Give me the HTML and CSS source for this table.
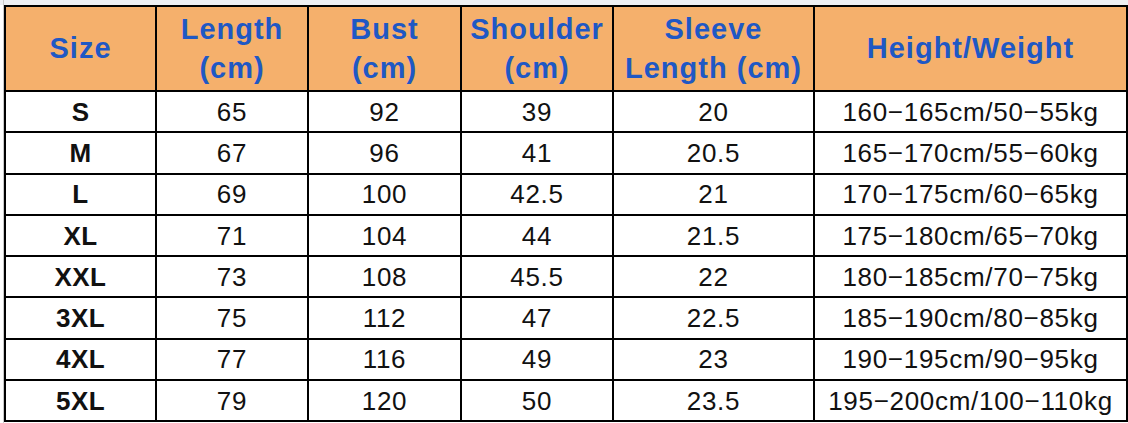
FILE: index.html
```html
<!DOCTYPE html>
<html>
<head>
<meta charset="utf-8">
<link rel="stylesheet" href="styles.css">
</head>
<body>
<div class="sheet">
  <table class="chart">
    <colgroup>
      <col class="c1"><col class="c2"><col class="c3"><col class="c4"><col class="c5"><col class="c6">
    </colgroup>
    <thead>
      <tr>
        <th>Size</th>
        <th>Length<br>(cm)</th>
        <th>Bust<br>(cm)</th>
        <th>Shoulder<br>(cm)</th>
        <th>Sleeve<br>Length (cm)</th>
        <th>Height/Weight</th>
      </tr>
    </thead>
    <tbody>
      <tr><td class="sz">S</td><td>65</td><td>92</td><td>39</td><td>20</td><td>160−165cm/50−55kg</td></tr>
      <tr><td class="sz">M</td><td>67</td><td>96</td><td>41</td><td>20.5</td><td>165−170cm/55−60kg</td></tr>
      <tr><td class="sz">L</td><td>69</td><td>100</td><td>42.5</td><td>21</td><td>170−175cm/60−65kg</td></tr>
      <tr><td class="sz">XL</td><td>71</td><td>104</td><td>44</td><td>21.5</td><td>175−180cm/65−70kg</td></tr>
      <tr><td class="sz">XXL</td><td>73</td><td>108</td><td>45.5</td><td>22</td><td>180−185cm/70−75kg</td></tr>
      <tr><td class="sz">3XL</td><td>75</td><td>112</td><td>47</td><td>22.5</td><td>185−190cm/80−85kg</td></tr>
      <tr><td class="sz">4XL</td><td>77</td><td>116</td><td>49</td><td>23</td><td>190−195cm/90−95kg</td></tr>
      <tr><td class="sz">5XL</td><td>79</td><td>120</td><td>50</td><td>23.5</td><td>195−200cm/100−110kg</td></tr>
    </tbody>
  </table>
</div>
</body>
</html>
```
FILE: styles.css
```css
html, body {
  margin: 0;
  padding: 0;
  background: #ffffff;
}
.sheet {
  width: 1128px;
  height: 423px;
  box-sizing: border-box;
  padding: 5px 0 0 4px;
  background:
    linear-gradient(to right, transparent 3px, #c9c9c9 3px, #c9c9c9 4px, transparent 4px) 0 0 / 4px 100% no-repeat,
    linear-gradient(#eef0f3, #eef0f3) 0 0 / 100% 5px no-repeat;
  font-family: "Liberation Sans", Arial, sans-serif;
  overflow: hidden;
}
.chart {
  border-collapse: collapse;
  table-layout: fixed;
  width: 1122px;
}
.c1 { width: 151px; }
.c2 { width: 152px; }
.c3 { width: 153px; }
.c4 { width: 152px; }
.c5 { width: 201px; }
.c6 { width: 313px; }
.chart th, .chart td {
  border: 2px solid #000;
  padding: 0;
  text-align: center;
  vertical-align: middle;
  white-space: nowrap;
}
.chart th {
  background: #f5b06c;
  color: #1f58c4;
  font-weight: bold;
  font-size: 29px;
  letter-spacing: 1px;
  line-height: 39px;
  height: 83px;
}
.chart td {
  color: #111;
  font-size: 26px;
  letter-spacing: 0.7px;
  height: 39.3px;
  line-height: 30px;
}
.chart td.sz {
  font-weight: bold;
  letter-spacing: 0.4px;
}
```
